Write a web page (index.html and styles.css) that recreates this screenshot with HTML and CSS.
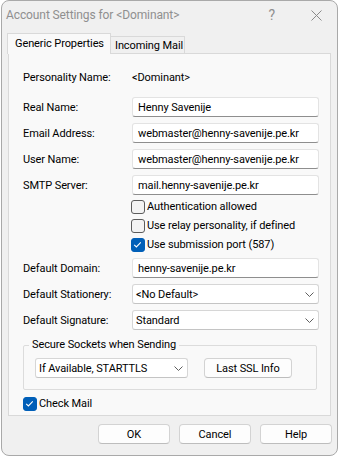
FILE: index.html
```html
<!DOCTYPE html>
<html>
<head>
<meta charset="utf-8">
<link rel="stylesheet" href="styles.css">
</head>
<body>
<div class="window">
  <div class="titlebar">
    <span class="title">Account Settings for &lt;Dominant&gt;</span>
    <span class="help">?</span>
    <svg class="close" width="11" height="11" viewBox="0 0 11 11"><path d="M0.5 0.5 L10.5 10.5 M10.5 0.5 L0.5 10.5" stroke="#8a8a8a" stroke-width="1" fill="none"/></svg>
  </div>
  <div class="tabs">
    <div class="tab active">Generic Properties</div>
    <div class="tab">Incoming Mail</div>
  </div>
  <div class="panel">
    <div class="row personality"><span class="label">Personality Name:</span><span class="value">&lt;Dominant&gt;</span></div>
    <div class="row field first"><span class="label">Real Name:</span><div class="input">Henny Savenije</div></div>
    <div class="row field"><span class="label">Email Address:</span><div class="input">webmaster@henny-savenije.pe.kr</div></div>
    <div class="row field"><span class="label">User Name:</span><div class="input">webmaster@henny-savenije.pe.kr</div></div>
    <div class="row field"><span class="label">SMTP Server:</span><div class="input">mail.henny-savenije.pe.kr</div></div>
    <div class="checks">
      <div class="check"><span class="box"></span><span>Authentication allowed</span></div>
      <div class="check"><span class="box"></span><span>Use relay personality, if defined</span></div>
      <div class="check"><span class="box checked"><svg width="13" height="13" viewBox="0 0 13 13"><path d="M3.2 6.8 L5.4 9 L9.8 4.4" stroke="#fff" stroke-width="1.1" fill="none"/></svg></span><span>Use submission port (587)</span></div>
    </div>
    <div class="row field domain"><span class="label">Default Domain:</span><div class="input">henny-savenije.pe.kr</div></div>
    <div class="row field"><span class="label">Default Stationery:</span><div class="select"><span>&lt;No Default&gt;</span><svg width="9" height="5" viewBox="0 0 9 5"><path d="M0.5 0.5 L4.5 4.5 L8.5 0.5" stroke="#5f5f5f" stroke-width="1" fill="none"/></svg></div></div>
    <div class="row field"><span class="label">Default Signature:</span><div class="select"><span>Standard</span><svg width="9" height="5" viewBox="0 0 9 5"><path d="M0.5 0.5 L4.5 4.5 L8.5 0.5" stroke="#5f5f5f" stroke-width="1" fill="none"/></svg></div></div>
    <fieldset class="group">
      <legend>Secure Sockets when Sending</legend>
      <div class="group-row">
        <div class="select ssl"><span>If Available, STARTTLS</span><svg width="9" height="5" viewBox="0 0 9 5"><path d="M0.5 0.5 L4.5 4.5 L8.5 0.5" stroke="#5f5f5f" stroke-width="1" fill="none"/></svg></div>
        <div class="btn sslinfo">Last SSL Info</div>
      </div>
    </fieldset>
    <div class="check checkmail"><span class="box checked"><svg width="13" height="13" viewBox="0 0 13 13"><path d="M3.2 6.8 L5.4 9 L9.8 4.4" stroke="#fff" stroke-width="1.1" fill="none"/></svg></span><span>Check Mail</span></div>
  </div>
  <div class="buttons">
    <div class="btn">OK</div>
    <div class="btn">Cancel</div>
    <div class="btn">Help</div>
  </div>
</div>
</body>
</html>
```

FILE: styles.css
```css
* { box-sizing: border-box; }
body {
  margin: 0;
  background: #ffffff;
  font-family: Roboto, "Liberation Sans", sans-serif;
  font-size: 11px;
  letter-spacing: -0.1px;
  color: #000;
  white-space: nowrap;
}
.window {
  margin-left: 1px;
  width: 337px;
  height: 456px;
  border: 1px solid #a9a9a9;
  border-radius: 8px;
  background: #f0f0f0;
  overflow: hidden;
  display: flex;
  flex-direction: column;
}
.titlebar {
  height: 32px;
  display: flex;
  align-items: flex-start;
  padding: 5px 15px 0 4px;
  flex-shrink: 0;
}
.title {
  flex: 1;
  color: #8f8f8f;
  font-size: 12px;
  line-height: 18px;
}
.help {
  color: #8f8f8f;
  font-size: 14px;
  line-height: 18px;
  margin-right: 36px;
}
.close { margin-top: 4px; }
.tabs {
  display: flex;
  align-items: flex-end;
  height: 21px;
  margin-left: 5px;
  flex-shrink: 0;
}
.tab {
  height: 17px;
  margin-bottom: 1px;
  padding: 1px 3px 0 4px;
  width: 75px;
  border: 1px solid #d9d9d9;
  border-bottom: none;
  background: #f0f0f0;
  display: flex;
  align-items: center;
  margin-left: -1px;
}
.tab.active {
  height: 21px;
  margin-bottom: 0;
  margin-left: 0;
  padding: 0 0 2px 7px;
  background: #f9f9f9;
  position: relative;
  z-index: 1;
  width: 104px;
}
.panel {
  margin: -1px 0 0 6px;
  width: 323px;
  background: #f9f9f9;
  border: 1px solid #d9d9d9;
  padding: 0 0 2px 14px;
  flex-shrink: 0;
}
.row {
  display: flex;
  align-items: center;
  height: 20px;
}
.label { width: 109px; flex-shrink: 0; }
.personality { margin-top: 13px; }
.field { margin-top: 6px; }
.field.first { margin-top: 10px; }
.field.domain { margin-top: 4px; }
.input {
  width: 187px;
  height: 20px;
  background: #fff;
  border: 1px solid #e3e3e3;
  border-bottom-color: #8e8e8e;
  border-radius: 3px;
  padding: 0 5px;
  display: flex;
  align-items: center;
  overflow: hidden;
}
.select {
  width: 187px;
  height: 20px;
  background: #fff;
  border: 1px solid #d6d6d6;
  border-bottom-color: #c4c4c4;
  border-radius: 3px;
  padding: 0 4px 0 3px;
  display: flex;
  align-items: center;
  justify-content: space-between;
}
.checks { margin-top: 2px; padding-left: 108px; }
.check {
  display: flex;
  align-items: center;
  height: 19px;
}
.box {
  width: 14px;
  height: 14px;
  border: 1px solid #5c5c5c;
  border-radius: 3px;
  background: #f3f3f3;
  margin-right: 2px;
  flex-shrink: 0;
  display: flex;
}
.box.checked {
  background: #005fb8;
  border-color: #005fb8;
}
.box svg { margin: -1px; }
.group {
  margin: 7px 0 0 0;
  width: 294px;
  border: 1px solid #dcdcdc;
  border-radius: 2px;
  padding: 0 0 11px 5px;
}
.group legend {
  padding: 0 3px;
  line-height: 16px;
}
.group-row {
  display: flex;
  align-items: center;
  margin-top: 5px;
  padding-left: 6px;
}
.select.ssl { width: 153px; }
.btn {
  height: 20px;
  background: #fdfdfd;
  border: 1px solid #d3d3d3;
  border-bottom-color: #bdbdbd;
  border-radius: 4px;
  display: flex;
  align-items: center;
  justify-content: center;
}
.sslinfo { width: 88px; margin-left: 16px; }
.checkmail { margin-top: 4px; }
.buttons {
  display: flex;
  justify-content: flex-end;
  gap: 9px;
  margin-top: 8px;
  padding-right: 5px;
}
.buttons .btn { width: 72px; }
```
